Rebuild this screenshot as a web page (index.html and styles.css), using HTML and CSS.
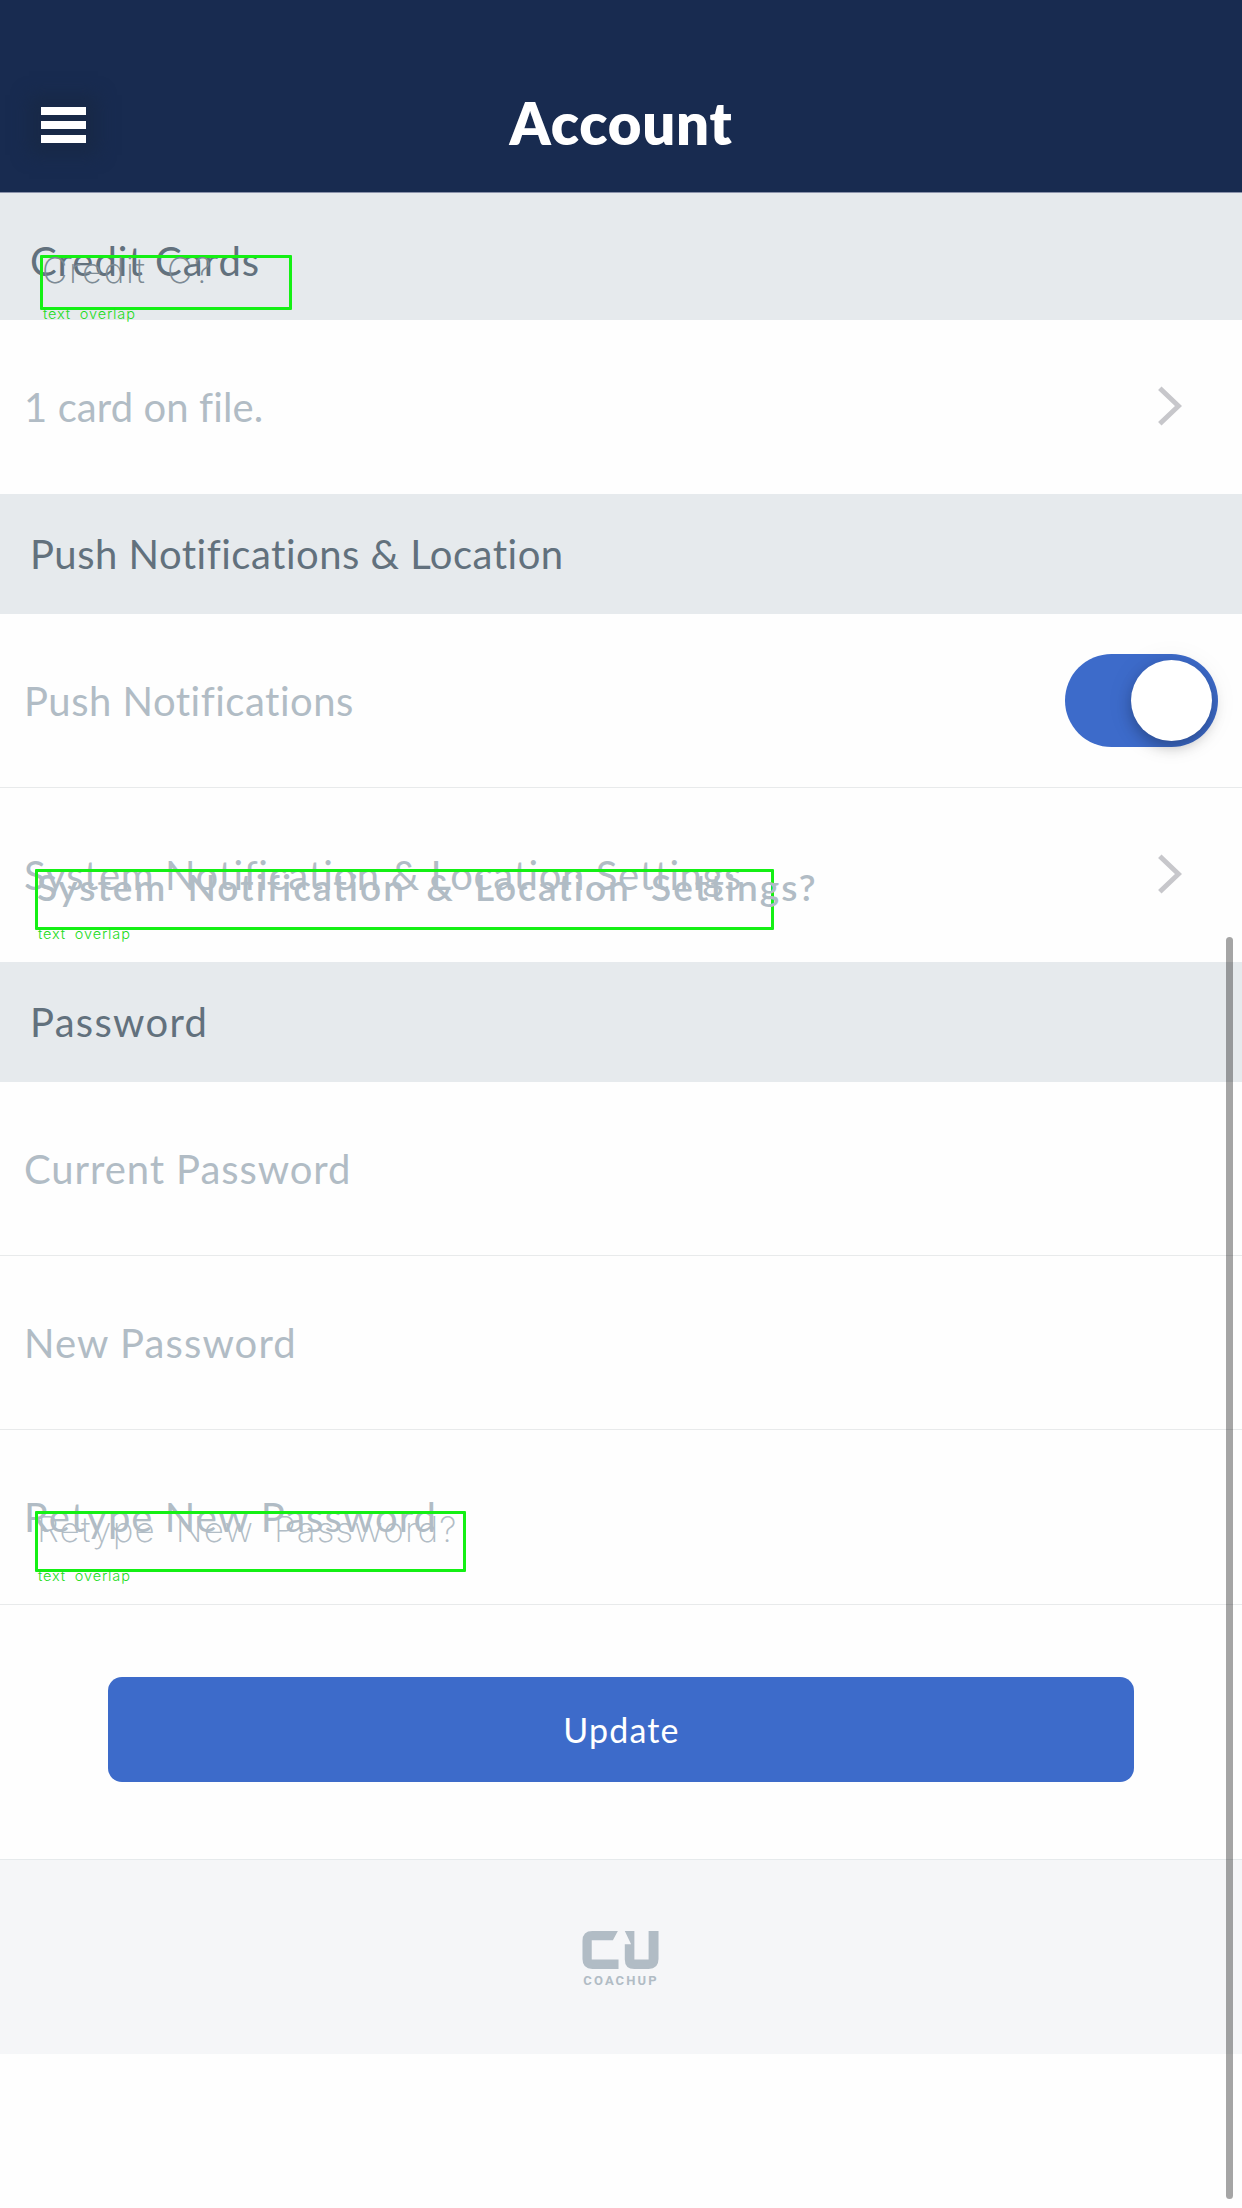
FILE: index.html
```html
<!DOCTYPE html>
<html lang="en">
<head>
<meta charset="utf-8">
<title>Account</title>
<link rel="stylesheet" href="styles.css">
</head>
<body>
<div class="screen">
  <header class="header">
    <button class="menu" aria-label="Menu"><i></i><i></i><i></i></button>
    <h1 class="title">Account</h1>
  </header>

  <h2 class="section section-first"><span class="t-cards">Credit Cards</span></h2>
  <div class="row row-last">
    <span class="t-file">1 card on file.</span>
    <svg class="chevron" viewBox="0 0 24 40"><path d="M1.8 2.2 20.5 20 1.8 37.8"/></svg>
  </div>

  <h2 class="section"><span class="t-push">Push Notifications &amp; Location</span></h2>
  <div class="row">
    <span class="t-push">Push Notifications</span>
    <span class="toggle"><span class="knob"></span></span>
  </div>
  <div class="row row-last">
    <span class="t-system">System Notification &amp; Location Settings</span>
    <svg class="chevron" viewBox="0 0 24 40"><path d="M1.8 2.2 20.5 20 1.8 37.8"/></svg>
  </div>

  <h2 class="section"><span class="t-password">Password</span></h2>
  <div class="row"><span class="t-current">Current Password</span></div>
  <div class="row"><span class="t-new">New Password</span></div>
  <div class="row row-tall"><span class="t-retype">Retype New Password</span></div>

  <div class="actions"><button class="update">Update</button></div>

  <footer class="footer">
    <svg class="logo" viewBox="122 269 236 121">
      <path d="M155 272H232L217 300H153V358H234V387H155Q125 387 125 357V302Q125 272 155 272Z"/>
      <path d="M253 272H282V358H325V272H355V357Q355 387 325 387H282Q253 387 253 358V312H272Z"/>
    </svg>
    <span class="brand">COACHUP</span>
  </footer>

  <div class="scrollbar"></div>

  <div class="mark mark-cards"><span class="mark-text">Credit C?</span><span class="mark-label">text overlap</span></div>
  <div class="mark mark-system"><span class="mark-text">System Notification &amp; Location Settings?</span><span class="mark-label">text overlap</span></div>
  <div class="mark mark-retype"><span class="mark-text">Retype New Password?</span><span class="mark-label">text overlap</span></div>
</div>
</body>
</html>
```
FILE: styles.css
```css
* { box-sizing: border-box; }

body {
  margin: 0;
  background: #fefefe;
  font-family: Lato, "Liberation Sans", sans-serif;
  font-size: 40px;
  font-variant-ligatures: none;
}

.screen {
  position: relative;
  height: 2208px;
  overflow: hidden;
}

/* Header */
.header {
  display: grid;
  grid-template-columns: 128px 1fr 128px;
  align-items: center;
  height: 193px;
  padding-top: 52px;
  background: #182b50;
  border-bottom: 1px solid #8b93ab;
}

.menu {
  display: flex;
  flex-direction: column;
  justify-content: center;
  gap: 6px;
  width: 45px;
  height: 36px;
  margin: 6px 0 0 41px;
  padding: 0;
  border: 0;
  background: #182947;
  box-shadow: 0 0 16px 12px #182947;
}

.menu i {
  height: 8px;
  background: #fff;
}

.title {
  margin: 0;
  color: #fff;
  font-size: 58px;
  font-weight: 800;
  letter-spacing: 0.8px;
  text-align: center;
}

/* Sections and rows */
.section {
  display: flex;
  align-items: center;
  height: 120px;
  margin: 0;
  padding: 0 30px;
  background: #e6eaed;
  color: #62717d;
  font-size: 40px;
  font-weight: 400;
}

.section-first {
  height: 127px;
  padding-top: 9px;
}

.row {
  display: flex;
  align-items: center;
  justify-content: space-between;
  height: 174px;
  padding: 1px 24px 0;
  border-bottom: 1px solid #e8eaeb;
  color: #b1bcc5;
}

.row-last { border-bottom-color: transparent; }

.row-tall {
  height: 175px;
  padding: 0 24px 1px;
}

.t-cards { letter-spacing: 1px; }
.t-file { letter-spacing: 0.1px; }
.t-push { letter-spacing: 0.5px; }
.t-system { letter-spacing: 0.61px; }
.t-password { letter-spacing: 1.3px; }
.t-current { letter-spacing: 0.92px; }
.t-new { letter-spacing: 1.1px; }
.t-retype { letter-spacing: 1.05px; }

.chevron {
  width: 24px;
  height: 40px;
  margin: 0 36px 3px 0;
  fill: none;
  stroke: #c7c7cb;
  stroke-width: 5;
}

.toggle {
  display: flex;
  justify-content: flex-end;
  width: 153px;
  height: 93px;
  margin-bottom: 2px;
  padding: 6px;
  border-radius: 47px;
  background: #3d6bca;
}

.knob {
  width: 81px;
  height: 81px;
  border-radius: 50%;
  background: #fff;
  box-shadow: 0 6px 14px rgba(0, 0, 0, 0.25), 0 2px 30px rgba(0, 0, 0, 0.07);
}

/* Submit */
.actions {
  height: 254px;
  padding: 72px 108px 0;
}

.update {
  display: block;
  width: 100%;
  height: 105px;
  padding: 0 0 0 1px;
  border: 0;
  border-radius: 14px;
  background: #3d6bca;
  color: #fff;
  font: 34px Lato, "Liberation Sans", sans-serif;
  letter-spacing: 1.2px;
}

/* Footer */
.footer {
  display: flex;
  flex-direction: column;
  align-items: center;
  height: 195px;
  padding: 70px 2px 0 0;
  border-top: 1px solid #e6eaec;
  background: #f5f6f8;
}

.logo {
  width: 79px;
  height: 40px;
  fill: #b1bcc5;
}

.brand {
  margin-top: 3px;
  padding-left: 2px;
  color: #b1bcc5;
  font: 700 13px/16px Roboto, sans-serif;
  letter-spacing: 2.1px;
}

.scrollbar {
  position: absolute;
  top: 937px;
  right: 9px;
  width: 7px;
  height: 1262px;
  border-radius: 4px;
  background: rgba(0, 0, 0, 0.35);
}

/* Overlap markers */
.mark {
  position: absolute;
  border: 3px solid #14f014;
  border-radius: 1px;
}

.mark-text,
.mark-label {
  position: absolute;
  white-space: nowrap;
}

.mark-text {
  font: 200 35px/40px Inter, sans-serif;
  word-spacing: 9px;
}

.mark-label {
  top: 100%;
  left: 0;
  margin-top: -2px;
  color: #22dc22;
  font: 300 14.5px/18px Inter, sans-serif;
  letter-spacing: 0.85px;
  word-spacing: 4px;
}

.mark-cards {
  top: 255px;
  left: 40px;
  width: 252px;
  height: 55px;
}

.mark-cards .mark-text {
  top: -8px;
  left: -1px;
  color: #7d8a94;
  letter-spacing: 1.6px;
}

.mark-system {
  top: 869px;
  left: 35px;
  width: 739px;
  height: 61px;
}

.mark-system .mark-text {
  top: -7px;
  left: -1px;
  color: #b1bcc5;
  font: 600 37px/44px Lato, sans-serif;
  letter-spacing: 2.02px;
  word-spacing: 9px;
}

.mark-retype {
  top: 1511px;
  left: 35px;
  width: 431px;
  height: 61px;
}

.mark-retype .mark-text {
  top: -5px;
  left: -1px;
  color: #b1bcc5;
  letter-spacing: 1.15px;
}
```
